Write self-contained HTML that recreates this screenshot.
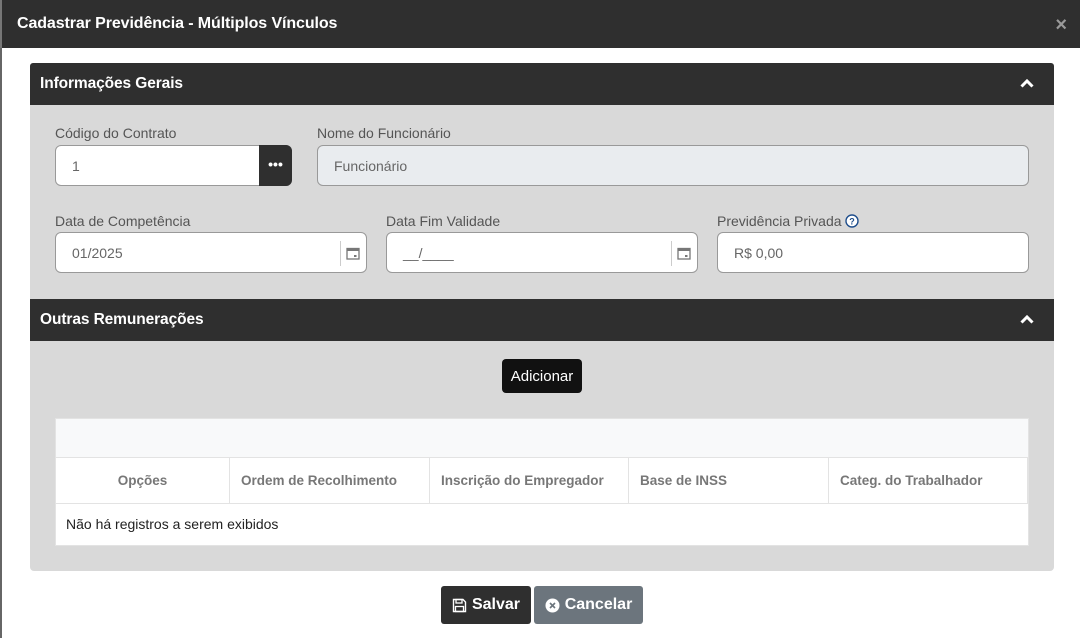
<!DOCTYPE html>
<html><head><meta charset="utf-8"><style>
*{box-sizing:border-box;margin:0;padding:0}
body{width:1080px;height:638px;overflow:hidden;background:#fff;font-family:"Liberation Sans",Roboto,sans-serif;position:relative}
.a{position:absolute}
.hdr{left:0;top:0;width:1080px;height:48px;background:#2f2f2f;border-left:2px solid #777}
.hdr span{position:absolute;left:15px;top:15px;color:#fff;font-weight:bold;font-size:16px;letter-spacing:-0.1px}
.hdr b{position:absolute;right:13px;top:14px;color:#999;font-size:20px}
.leftstrip{left:0;top:48px;width:2px;height:590px;background:#666}
.sh{left:30px;width:1024px;height:42px;background:#2f2f2f;border-radius:3px 3px 0 0;color:#fff;font-weight:bold;font-size:15.5px;padding:12px 10px;letter-spacing:-0.1px}
.sb{left:30px;width:1024px;background:#d9d9d9}
.lbl{font-size:14px;color:#555}
.in{height:41px;border:1px solid #999;border-radius:6px;background:#fff;font-size:14px;color:#666;padding:12px 16px}
.chev{position:absolute;right:20px;top:16px}
.cal{position:absolute;right:0;top:8px;width:26px;height:25px;border-left:1px solid #ccc}
.btn{height:38px;border-radius:3px;color:#fff;font-weight:bold;font-size:16px;display:flex;align-items:center;justify-content:center;gap:5px}
.th{line-height:45px;border-right:1px solid #e3e3e3;padding-left:11px}
</style></head><body>
<div class="a hdr"><span>Cadastrar Previdência - Múltiplos Vínculos</span><b>×</b></div>
<div class="a leftstrip"></div>

<div class="a sh" style="top:63px">Informações Gerais<svg class="chev" width="14" height="9" viewBox="0 0 14 9"><path d="M1.5 7.5L7 2l5.5 5.5" stroke="#fff" stroke-width="3" fill="none"/></svg></div>
<div class="a sb" style="top:105px;height:194px"></div>
<div class="a lbl" style="left:55px;top:125px">Código do Contrato</div>
<div class="a in" style="left:55px;top:145px;width:237px">1</div>
<div class="a" style="left:259px;top:145px;width:33px;height:41px;background:#2f2f2f;border-radius:0 6px 6px 0;color:#fff;text-align:center;font-weight:bold;font-size:14px;line-height:38px">•••</div>
<div class="a lbl" style="left:317px;top:125px">Nome do Funcionário</div>
<div class="a in" style="left:317px;top:145px;width:712px;background:#e9ecef">Funcionário</div>

<div class="a lbl" style="left:55px;top:213px">Data de Competência</div>
<div class="a in" style="left:55px;top:232px;width:312px">01/2025<div class="cal"><svg style="margin:5px 0 0 5px" width="14" height="14" viewBox="0 0 14 14"><rect x="1" y="2.5" width="12" height="10.5" fill="none" stroke="#777" stroke-width="1.3"/><rect x="1" y="2.5" width="12" height="2.5" fill="#777"/><rect x="8" y="9" width="2.5" height="2" fill="#777"/></svg></div></div>
<div class="a lbl" style="left:386px;top:213px">Data Fim Validade</div>
<div class="a in" style="left:386px;top:232px;width:312px">__/____<div class="cal"><svg style="margin:5px 0 0 5px" width="14" height="14" viewBox="0 0 14 14"><rect x="1" y="2.5" width="12" height="10.5" fill="none" stroke="#777" stroke-width="1.3"/><rect x="1" y="2.5" width="12" height="2.5" fill="#777"/><rect x="8" y="9" width="2.5" height="2" fill="#777"/></svg></div></div>
<div class="a lbl" style="left:717px;top:213px">Previdência Privada <svg width="14" height="14" viewBox="0 0 14 14" style="vertical-align:-2px"><circle cx="7" cy="7" r="6" fill="#fff" stroke="#1f4e8c" stroke-width="1.4"/><text x="7" y="10.5" font-size="9" font-weight="bold" text-anchor="middle" fill="#1f4e8c" font-family="Liberation Sans">?</text></svg></div>
<div class="a in" style="left:717px;top:232px;width:312px">R$ 0,00</div>

<div class="a sh" style="top:299px;border-radius:0">Outras Remunerações<svg class="chev" width="14" height="9" viewBox="0 0 14 9"><path d="M1.5 7.5L7 2l5.5 5.5" stroke="#fff" stroke-width="3" fill="none"/></svg></div>
<div class="a sb" style="top:341px;height:230px;border-radius:0 0 4px 4px"></div>
<div class="a btn" style="left:502px;top:359px;width:80px;height:34px;background:#111;font-weight:normal;font-size:15px;border-radius:4px">Adicionar</div>

<div class="a" style="left:55px;top:418px;width:974px;height:128px;background:#fff;border:1px solid #e3e3e3">
<div style="height:39px;background:#f8f9fa;border-bottom:1px solid #e3e3e3"></div>
<div style="display:flex;height:46px;border-bottom:1px solid #e3e3e3;color:#777;font-weight:bold;font-size:13.5px">
<div class="th" style="width:174px;text-align:center;padding:0">Opções</div>
<div class="th" style="width:200px">Ordem de Recolhimento</div>
<div class="th" style="width:199px">Inscrição do Empregador</div>
<div class="th" style="width:200px">Base de INSS</div>
<div class="th" style="width:199px">Categ. do Trabalhador</div>
</div>
<div style="font-size:14px;color:#222;padding:12px 10px">Não há registros a serem exibidos</div>
</div>

<div class="a btn" style="left:441px;top:586px;width:90px;background:#2f2f2f"><svg width="15" height="15" viewBox="0 0 15 15"><path d="M1.5 1.5h9.5l2.5 2.5v9.5h-12z" fill="none" stroke="#fff" stroke-width="1.4"/><rect x="4" y="1.5" width="6" height="3.5" fill="none" stroke="#fff" stroke-width="1.3"/><rect x="3.5" y="8.5" width="8" height="5" fill="none" stroke="#fff" stroke-width="1.3"/></svg>Salvar</div>
<div class="a btn" style="left:534px;top:586px;width:109px;background:#6c757d"><svg width="15" height="15" viewBox="0 0 15 15"><circle cx="7.5" cy="7.5" r="7" fill="#fff"/><path d="M5 5l5 5M10 5l-5 5" stroke="#6c757d" stroke-width="1.6"/></svg>Cancelar</div>
</body></html>
